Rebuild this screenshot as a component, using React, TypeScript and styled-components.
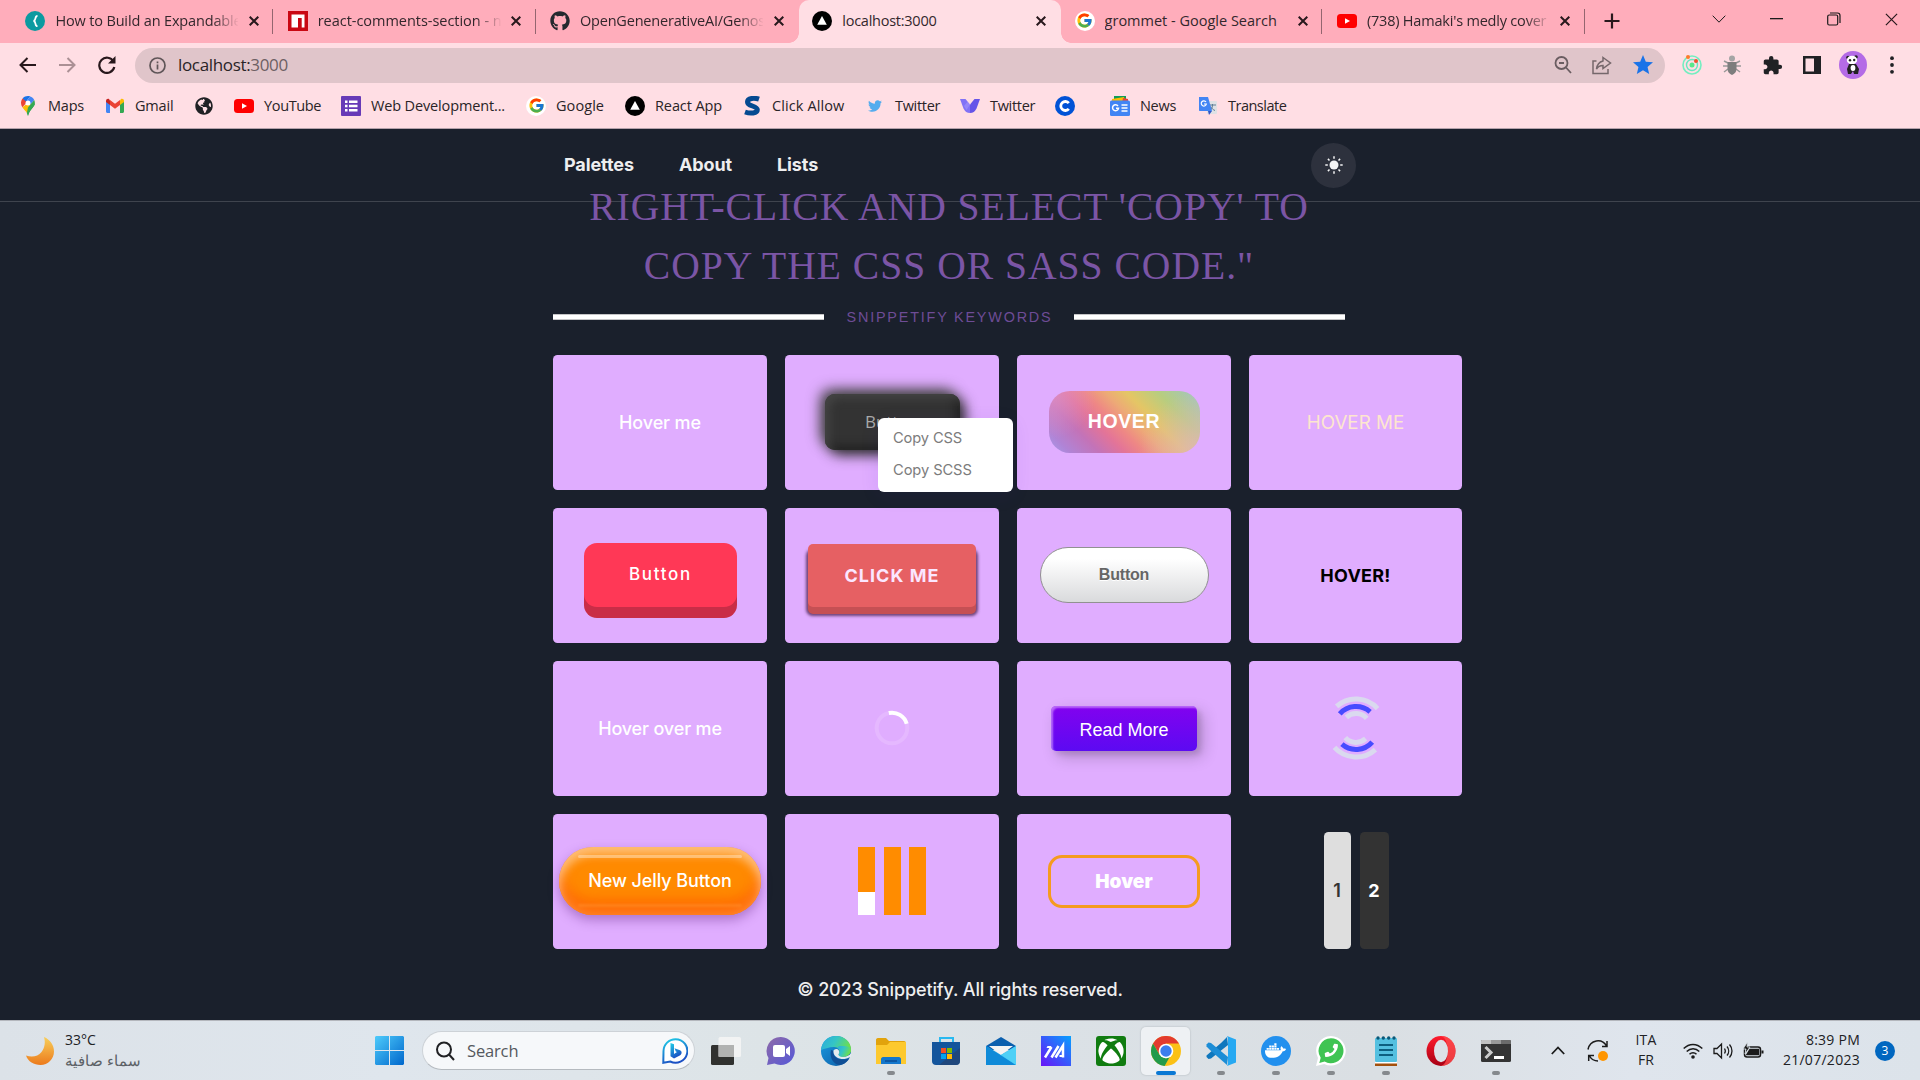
import React from "react";
import styled, { createGlobalStyle, css } from "styled-components";
import { FcGoogle } from "react-icons/fc";
import { FaGithub, FaTwitter, FaGlobeAmericas, FaXbox, FaDocker, FaPhoneAlt } from "react-icons/fa";
import { MdExtension, MdStar } from "react-icons/md";

const ui = `"Open Sans", "Noto Sans", sans-serif`;
const inter = `Inter, "Liberation Sans", sans-serif`;
const arial = `"Liberation Sans", Arial, sans-serif`;

const Global = createGlobalStyle`
  * { box-sizing: border-box; }
  html, body { margin: 0; padding: 0; background: #1a202c; overflow: hidden; }
  svg { display: block; flex: none; }
`;

type Spaced = { $ls?: number };
const spacing = css<Spaced>`letter-spacing: ${(p) => p.$ls ?? 0}px;`;

const Screen = styled.div`
  width: 1920px; height: 1080px; display: flex; flex-direction: column;
  background: #1a202c; font-family: ${ui}; overflow: hidden;
`;

/* ---------- browser chrome ---------- */
const TabStrip = styled.div`
  height: 43px; flex: none; display: flex; padding-left: 12px; background: #ffadbb;
`;
const Tab = styled.div<{ $active?: boolean; $line?: boolean }>`
  position: relative; width: 262.3px; height: 43px; flex: none; display: flex; align-items: center;
  padding: 0 11px 2px 13.4px; color: #33272c;
  ${(p) => p.$active && css`
    background: #ffdee4; border-radius: 10px 10px 0 0;
    &::before, &::after {
      content: ""; position: absolute; bottom: 0; width: 10px; height: 10px;
    }
    &::before { left: -10px; background: radial-gradient(circle at 0 0, transparent 9.5px, #ffdee4 10px); }
    &::after { right: -10px; background: radial-gradient(circle at 100% 0, transparent 9.5px, #ffdee4 10px); }
  `}
  ${(p) => p.$line && css`
    background: linear-gradient(#94656f, #94656f) calc(100% - 1px) 9px / 1px 25px no-repeat;
  `}
`;
const TabTitle = styled.div<Spaced & { $fade?: boolean }>`
  width: 183px; margin: 0 10.6px 0 10px; overflow: hidden; white-space: nowrap; font-size: 14.5px; line-height: 24px;
  ${spacing}
  ${(p) => p.$fade && css`mask-image: linear-gradient(90deg, #000 158px, transparent 184px);`}
`;
const NewTab = styled.div`width: 52px; display: flex; align-items: center; justify-content: center; padding-bottom: 1px;`;
const WindowControls = styled.div`
  margin-left: auto; display: flex; height: 38px;
  & > div { width: 57.5px; display: flex; align-items: center; justify-content: center; }
`;
const Toolbar = styled.div`
  height: 45px; flex: none; display: flex; align-items: center; background: #ffdee4; padding: 0 0 1px 15px;
`;
const NavIcon = styled.div<{ $w: number }>`width: ${(p) => p.$w}px; flex: none; display: flex; align-items: center; justify-content: center;`;
const Omnibox = styled.div`
  width: 1530px; height: 35px; border-radius: 18px; background: #e0c5ca; display: flex; align-items: center;
  padding: 0 10px 0 14px; flex: none;
`;
const Url = styled.div<Spaced>`
  font-size: 17px; margin-left: 12px; color: #2a2427; flex: 1; white-space: nowrap; line-height: 24px; ${spacing}
  span { color: #6d5f63; }
`;
const OmniIcons = styled.div`display: flex; align-items: center; gap: 18px;`;
const Bookmarks = styled.div`
  height: 41px; flex: none; display: flex; align-items: center; padding: 0 0 5px 18px; background: #ffdee4;
  border-bottom: 1px solid #b5a2ab;
`;
const Bookmark = styled.div<{ $w: number }>`
  width: ${(p) => p.$w}px; flex: none; display: flex; align-items: center; gap: 10px; color: #2a2427;
`;
const BookmarkIcon = styled.div`width: 20px; height: 20px; display: flex; align-items: center; justify-content: center; flex: none;`;
const BookmarkLabel = styled.span<Spaced>`font-size: 14.5px; white-space: nowrap; line-height: 22px; ${spacing}`;
const GoogleDisc = styled.div`
  width: 20px; height: 20px; flex: none; border-radius: 50%; background: #fff; display: flex; align-items: center; justify-content: center;
`;

/* ---------- web page ---------- */
const Page = styled.div`height: 891px; flex: none; display: flex; flex-direction: column; font-family: ${inter};`;
const Header = styled.header`
  height: 73px; flex: none; border-bottom: 1px solid #3f444e; padding: 0 564px 0 564px;
  display: flex; align-items: center; gap: 45px;
`;
const NavLink = styled.a<Spaced>`color: #eeeeef; font-weight: 700; font-size: 18px; line-height: 24px; white-space: nowrap; ${spacing}`;
const ThemeToggle = styled.div`
  width: 45px; height: 45px; border-radius: 50%; background: #2d313d; margin-left: auto;
  display: flex; align-items: center; justify-content: center;
`;
const Main = styled.main`width: 792px; margin: -24px 0 0 553px; flex: none;`;
const Title = styled.h1<Spaced>`
  margin: 0; font: 400 39.6px/59px "Liberation Serif", "Times New Roman", serif; color: #7b55a5; text-align: center; ${spacing}
`;
const Divider = styled.div`height: 42px; display: flex; align-items: center; justify-content: space-between;`;
const Rule = styled.div`width: 271px; height: 6px; background: #fff; border: solid #c4c4c6; border-width: 1px 0;`;
const Keywords = styled.span<Spaced>`font: 400 14.4px/20px ${arial}; color: #6e4c96; white-space: nowrap; padding-left: 1px; margin-top: -1px; ${spacing}`;

const Grid = styled.section`
  margin-top: 17px; width: 909px; display: grid; grid-template-columns: 214px 214px 214px 213px; grid-auto-rows: 135px; gap: 18px;
`;
const Card = styled.div<{ $plain?: boolean }>`
  position: relative; border-radius: 4.5px; display: flex; align-items: center; justify-content: center;
  background: ${(p) => (p.$plain ? "transparent" : "#e0adff")};
`;
const Caption = styled.span<Spaced & { $color?: string; $weight?: number; $size?: number }>`
  font-size: ${(p) => p.$size ?? 18}px; font-weight: ${(p) => p.$weight ?? 500}; color: ${(p) => p.$color ?? "#fff"};
  line-height: 24px; white-space: nowrap; ${spacing}
`;
const NeuButton = styled.div`
  width: 135px; height: 56px; margin-bottom: 1px; border-radius: 10px; background: #333; color: #aaa;
  display: flex; align-items: center; justify-content: center; font: 500 17px/24px ${ui};
  box-shadow: -4.5px -4.5px 13.5px #444, 4.5px 4.5px 13.5px #222, inset 4.5px 4.5px 9px #444, inset -4.5px -4.5px 9px #222;
`;
const ContextMenu = styled.div`
  position: absolute; left: 93px; top: 63px; z-index: 3; width: 135px; height: 74px; border-radius: 6px; background: #fff;
  box-shadow: 0 4px 20px rgba(60, 30, 160, 0.08);
  padding: 3px 15px 5px; display: flex; flex-direction: column; justify-content: center;
`;
const MenuItem = styled.div<Spaced>`font: 400 14.7px/32px ${inter}; color: #7c7c7c; white-space: nowrap; ${spacing}`;
const RainbowButton = styled.div`
  width: 151px; height: 62px; margin-bottom: 1px; border-radius: 21px; display: flex; align-items: center; justify-content: center; padding-bottom: 2px;
  font-family: ${arial};
  background:
    radial-gradient(circle at 100% 100%, rgba(224, 180, 190, 0.85) 0, rgba(210, 185, 170, 0) 62px),
    radial-gradient(circle at 0 0, rgba(224, 150, 205, 0.75) 0, rgba(224, 150, 205, 0) 48px),
    linear-gradient(45deg, #a79cec 0%, #b084d6 10%, #c373b8 24%, #e37498 36%, #ee8785 45%, #edaa76 55%, #e4c665 65%, #b7cd80 80%, #a0c4c8 100%);
`;
const PushButton = styled.div`
  width: 153px; height: 64px; margin: 0 0 1px 1px; padding-bottom: 2px; border-radius: 13px; background: #ff3856; box-shadow: 0 11px 0 #c92d47;
  display: flex; align-items: center; justify-content: center;
`;
const ClickButton = styled.div`
  width: 168px; height: 63px; border-radius: 5px; background: #e66063; display: flex; align-items: center; justify-content: center;
  box-shadow: 0 7px 0 #c55054, 0 7px 3px 1.5px rgba(60, 20, 60, 0.7);
`;
const PillButton = styled.div`
  width: 169px; height: 56px; margin-bottom: 1px; border-radius: 28px; border: 1px solid #919191; display: flex; align-items: center; justify-content: center;
  background: linear-gradient(#fff 20%, #d9dadc); padding-bottom: 1px;
  font-family: ${arial}; text-shadow: 0 1px 0 #fff;
`;
const ReadButton = styled.div`
  width: 146px; height: 45px; border-radius: 5px; display: flex; align-items: center; justify-content: center; padding-top: 2px;
  background: linear-gradient(#8202ef, #5c0af2);
  font-family: ${arial};
  box-shadow: inset 2px 2px 2px rgba(224, 173, 255, 0.6), 6px 6px 16px rgba(0, 0, 0, 0.2), 4px 4px 5px rgba(0, 0, 0, 0.1);
`;
const JellyButton = styled.div`
  position: relative; width: 202px; height: 68px; margin-bottom: 1px; border-radius: 34px; display: flex; align-items: center; justify-content: center;
  background: #ff8a00;
  box-shadow: inset 0 9px 8px rgba(255, 255, 255, 0.36), inset 0 0 14px rgba(255, 190, 120, 0.55), inset 0 -14px 14px #ff6600, 0 5px 12px rgba(80, 20, 110, 0.36);
  &::before, &::after { content: ""; position: absolute; left: 19px; right: 19px; height: 3px; border-radius: 2px; }
  &::before { top: 8px; background: rgba(255, 225, 190, 0.5); filter: blur(0.6px); }
  &::after { bottom: 8px; background: rgba(255, 140, 40, 0.6); filter: blur(0.8px); }
`;
const Bars = styled.div`display: flex; gap: 8.5px; height: 68px; margin-bottom: 1px;`;
const Bar = styled.div<{ $fill: number }>`
  width: 17px; background: linear-gradient(#ff8c00 ${(p) => p.$fill}px, #fff ${(p) => p.$fill}px);
`;
const OutlineButton = styled.div`
  width: 152px; height: 53px; border-radius: 14px; border: 3px solid #f59b1f; display: flex; align-items: center; justify-content: center;
`;
const Lifted = styled.div`margin-bottom: 1px;`;
const Pages = styled.div`align-self: flex-end; display: flex; gap: 9px; height: 117px; padding-left: 1px;`;
const PageStep = styled.div<{ $w: number; $dark?: boolean }>`
  width: ${(p) => p.$w}px; border-radius: 4.5px; display: flex; align-items: center; justify-content: center;
  background: ${(p) => (p.$dark ? "#333" : "#dedede")};
`;
const Footer = styled.footer`flex: 1; padding-top: 11px; display: flex; align-items: center; justify-content: center;`;

/* ---------- taskbar ---------- */
const Taskbar = styled.div`
  height: 60px; flex: none; display: flex; align-items: center; border-top: 1px solid #b4b7bd; color: #202124;
  background: linear-gradient(90deg, #dce2e8, #dfe6ed 20%, #dde4e7 40%, #dbe1e6 55%, #dadfe3 72%, #dfe5ed 85%, #dce3ea);
`;
const Weather = styled.div`width: 375px; padding-left: 25px; display: flex; align-items: center; gap: 10px;`;
const Lines = styled.div<{ $align?: string }>`display: flex; flex-direction: column; align-items: ${(p) => p.$align ?? "flex-start"}; margin-top: -2px;`;
const Line = styled.span<Spaced & { $muted?: boolean }>`
  font-size: ${(p) => (p.$muted ? 14.7 : 14)}px; line-height: 20px; white-space: nowrap; color: ${(p) => (p.$muted ? "#5c6166" : "#202124")}; ${spacing}
`;
const SearchBox = styled.div`
  width: 273px; height: 39px; margin: 0 3px 0 18px; border-radius: 20px; background: #f6f8fa; border: 1px solid #cdd2d7; border-bottom-color: #b5babf;
  display: flex; align-items: center; padding: 0 6px 0 12px; flex: none;
`;
const SearchText = styled.span<Spaced>`font-size: 16.5px; color: #55595e; margin-left: 12px; flex: 1; line-height: 24px; ${spacing}`;
const AppSlot = styled.div<{ $active?: boolean }>`
  width: 49px; height: 48px; margin: 0 3px; border-radius: 5px; display: flex; flex-direction: column; align-items: center; padding-top: 9px; flex: none;
  ${(p) => p.$active && css`background: #eef1f4; box-shadow: 0 0 1px 1px rgba(190, 195, 200, 0.5);`}
`;
const Indicator = styled.div<{ $active?: boolean }>`
  width: ${(p) => (p.$active ? 20 : 8)}px; height: 4px; border-radius: 2px; margin-top: 5px;
  background: ${(p) => (p.$active ? "#0a78d4" : "#85898d")};
`;
const Tray = styled.div`margin-left: auto; display: flex; align-items: center; padding-right: 25px;`;
const TrayCell = styled.div<{ $w: number; $end?: boolean }>`
  width: ${(p) => p.$w}px; display: flex; align-items: center; justify-content: ${(p) => (p.$end ? "flex-end" : "center")};
`;
const Badge = styled.div`
  width: 20px; height: 20px; border-radius: 50%; background: #0067c0; color: #fff; margin-left: 15px; font-size: 12px; line-height: 20px; text-align: center;
`;

/* ---------- icons ---------- */
const Cross = ({ s = 10, w = 2 }: { s?: number; w?: number }) => (
  <svg width={s} height={s} viewBox="0 0 10 10" stroke="#28181c" strokeWidth={(w * 10) / s} fill="none"><path d="M.7.7l8.6 8.6M9.3.7L.7 9.3" /></svg>
);
const Teal = () => (
  <svg width="20" height="20" viewBox="0 0 20 20"><circle cx="10" cy="10" r="10" fill="#0b9aa0" />
    <path d="M12.500 4.800c-3.200 0-.8 4.600-4 5.200 3.200.6.8 5.200 4 5.200" stroke="#fff" strokeWidth="1.800" fill="none" /></svg>
);
const Npm = () => (
  <svg width="20" height="20" viewBox="0 0 20 20"><path fill="#c90813" d="M0 0h20v20H0z" /><path fill="#fff" d="M3.500 3.500h13v13h-2.800V7H10v9.500H3.500z" /></svg>
);
const Triangle = () => (
  <svg width="20" height="20" viewBox="0 0 20 20"><circle cx="10" cy="10" r="10" fill="#000" /><path fill="#fff" d="M10 5l4.800 8.800H5.200z" /></svg>
);
const YouTube = () => (
  <svg width="20" height="20" viewBox="0 0 20 20"><rect y="3" width="20" height="14" rx="3.500" fill="#f00" /><path fill="#fff" d="M8 7.200l5 2.800-5 2.800z" /></svg>
);
const Google = () => <GoogleDisc><FcGoogle size={17} /></GoogleDisc>;
const MapsPin = () => (
  <svg width="14" height="20" viewBox="0 0 14 20">
    <path fill="#34a853" d="M7 20c.6-3 2-5 4-7.500C12.800 10.300 14 9 14 7L6 14c.5 2 .7 4 1 6z" />
    <path fill="#fbbc04" d="M1.400 11.200C3 13.500 5 15.500 6 17L13 8l-6-1z" />
    <path fill="#ea4335" d="M1.600 2.500C-.5 5-.5 8.500 1.400 11.200L7 5z" />
    <path fill="#1a73e8" d="M1.600 2.500L5 5.500 9.200.4C6.400-.4 3.500.3 1.600 2.500z" />
    <path fill="#4285f4" d="M9.200.4L5 5.500l4 3.500L13.200 4C12.300 2.200 11 1 9.200.4z" />
    <path fill="#34a853" d="M13.200 4L7 11.500 5.800 17 7 20c.6-3 2-5 4-7.500 3-3.600 3.500-5.500 2.200-8.500z" />
    <circle cx="7" cy="7" r="2.500" fill="#fff" />
  </svg>
);
const Gmail = () => (
  <svg width="20" height="20" viewBox="0 0 20 20">
    <path fill="#4285f4" d="M1 5v10.500c0 .8.600 1.500 1.500 1.500H5V8z" /><path fill="#34a853" d="M19 5v10.500c0 .8-.6 1.500-1.500 1.500H15V8z" />
    <path fill="#fbbc04" d="M15 4.500V9l4-3V4.800c0-1.800-2-2.600-3.200-1.600z" /><path fill="#c5221f" d="M5 4.500V9L1 6V4.800C1 3 3 2.200 4.200 3.200z" />
    <path fill="#ea4335" d="M5 9V4l5 3.800L15 4v5l-5 3.800z" />
  </svg>
);
const FormIcon = () => (
  <svg width="20" height="20" viewBox="0 0 20 20"><rect width="20" height="20" rx="1" fill="#673ab7" />
    <path fill="#fff" d="M4 4.500h2.500V7H4zM8 4.500h8.500V7H8zM4 8.800h2.500v2.500H4zM8 8.800h8.500v2.500H8zM4 13h2.500v2.500H4zM8 13h8.500v2.500H8z" /></svg>
);
const SIcon = () => (
  <svg width="20" height="20" viewBox="0 0 20 20"><path d="M17 3.200C13 1.800 5.500 1.600 5.500 6c0 4.600 9.800 3.400 9.800 7.800 0 3.600-7 4-12.300 2.200" stroke="#054a91" strokeWidth="5" fill="none" /></svg>
);
const VIcon = () => (
  <svg width="20" height="20" viewBox="0 0 20 20"><path fill="#8172f6" d="M0 3h5.500L10 8.500V17c-3 0-5-1.500-6.500-4.500z" /><path fill="#6554e8" d="M20 3h-5.500L10 8.500V17c3 0 5-1.500 6.500-4.500z" /><path fill="#a394fb" d="M4 10l3.500-4.200L10 8.500 6.500 14z" opacity=".6" /></svg>
);
const CIcon = () => (
  <svg width="20" height="20" viewBox="0 0 20 20"><circle cx="10" cy="10" r="10" fill="#0052d6" /><path d="M13.800 7.200a4.500 4.500 0 1 0 0 5.600" stroke="#fff" strokeWidth="2.800" fill="none" /></svg>
);
const NewsIcon = () => (
  <svg width="20" height="20" viewBox="0 0 20 20"><path fill="#0f9d58" d="M4 0h12v6H4z" /><path fill="#fbbc04" d="M2 3l12-2 1 6H2z" /><path fill="#ea4335" d="M13 2l5 1v4h-6z" />
    <rect y="4.500" width="20" height="15.500" rx="1.500" fill="#4285f4" /><path d="M11.500 9h6M11.500 12h6M11.500 15h6" stroke="#fff" strokeWidth="1.400" /><path d="M8 10a3 3 0 1 0 .5 2.300H6" stroke="#fff" strokeWidth="1.500" fill="none" /></svg>
);
const TranslateIcon = () => (
  <svg width="20" height="20" viewBox="0 0 20 20"><rect x="9" y="5" width="10" height="13" rx="1" fill="#dfe1e5" /><path d="M11 9h7M14.500 8v1c0 3-1.500 5-3 6M12.500 10.500c1 2 3 3.500 4.500 4" stroke="#5f7d95" fill="none" />
    <path fill="#4285f4" d="M1 1h9l4 14H2c-.6 0-1-.4-1-1z" /><path fill="#3354c4" d="M10 15h4l-3 4z" /><path d="M8 6a2.600 2.600 0 1 0 .400 2H6" stroke="#fff" strokeWidth="1.200" fill="none" /></svg>
);
const Panda = () => (
  <svg width="28" height="28" viewBox="0 0 28 28"><circle cx="14" cy="14" r="14" fill="#b46be6" />
    <circle cx="9" cy="6.500" r="1.800" fill="#222" /><circle cx="17" cy="6" r="1.800" fill="#222" /><ellipse cx="13" cy="9" rx="5.200" ry="4.300" fill="#fff" />
    <circle cx="11" cy="9.200" r="1.200" fill="#222" /><circle cx="15.200" cy="9" r="1.200" fill="#222" />
    <path fill="#222" d="M10 13h7l3 5-1 5h-4l-1-3-2 3H9l-1-5z" /><ellipse cx="14" cy="17" rx="2.400" ry="3" fill="#fff" /></svg>
);
const Sun = () => (
  <svg width="18" height="18" viewBox="0 0 18 18" stroke="#f4f4f5" strokeWidth="1.500"><circle cx="9" cy="9" r="4.500" fill="#f4f4f5" stroke="none" />
    <path d="M9 .3v2.500M9 15.200v2.500M.3 9h2.500M15.200 9h2.500M2.900 2.900l1.600 1.600M13.500 13.500l1.600 1.600M2.900 15.100l1.600-1.600M13.500 4.500l1.600-1.600" /></svg>
);
const Arcs = () => (
  <svg width="66" height="66" viewBox="-33 -33 66 66" fill="none" strokeWidth="5">
    <g stroke="#dad9ef" transform="rotate(3)"><path d="M-20.500-20.500a29 29 0 0 1 41 0M-20.500 20.500a29 29 0 0 0 41 0" /></g>
    <g stroke="#474bff" transform="rotate(-4)"><path d="M-15.200-15.200a21.500 21.500 0 0 1 30.400 0M-15.200 15.200a21.500 21.500 0 0 0 30.400 0" /></g>
    <g stroke="#dad9ef" transform="rotate(3)"><path d="M-10.200-10.200a14.400 14.400 0 0 1 20.400 0M-10.200 10.200a14.400 14.400 0 0 0 20.400 0" /></g>
  </svg>
);
const Spinner = () => (
  <svg width="36" height="36" viewBox="-18 -18 36 36" fill="none" strokeWidth="4"><circle r="15.300" stroke="#e5b8ff" /><path d="M-3.200-15A15.300 15.300 0 0 1 14.700-4.200" stroke="#fff" /></svg>
);

const Moon = () => (
  <svg width="30" height="30" viewBox="0 0 30 30"><defs><linearGradient id="moon" x1="0" y1="0" x2="0" y2="1"><stop stopColor="#f8cf5a" /><stop offset="1" stopColor="#ec7a1c" /></linearGradient></defs>
    <path fill="url(#moon)" d="M19 1c6 2.500 10 8 10 14.500C29 23 23 29 15.500 29 9 29 3 25.500 1 19.500c6 2 12 1 15.500-3.500S20.500 6 19 1z" /></svg>
);
const WinLogo = () => (
  <svg width="29" height="29" viewBox="0 0 29 29"><defs><linearGradient id="win" x1="0" y1="0" x2="1" y2="1"><stop stopColor="#4ecbfb" /><stop offset="1" stopColor="#0067cc" /></linearGradient></defs>
    <path fill="url(#win)" d="M1 0h13v14H0V1zM15 0h13l1 1v13H15zM0 15h14v14H1l-1-1zM15 15h14v13l-1 1H15z" /></svg>
);
const Bing = () => (
  <svg width="26" height="26" viewBox="0 0 26 26"><defs><linearGradient id="bing" x1="0" y1="0" x2=".4" y2="1"><stop stopColor="#1fd0e8" /><stop offset="1" stopColor="#1b50c4" /></linearGradient></defs>
    <path d="M13.500 1.200a11.800 11.800 0 1 1-5.300 22.300L1.300 24.700 1.500 13A12 12 0 0 1 13.500 1.200z" fill="#fff" stroke="url(#bing)" strokeWidth="2" />
    <path fill="url(#bing)" d="M8.500 5l3.500 1.300V16l3-2-1.200-.6-1.300-3.200 5.500 2.100c2.200 1 2.200 4-.2 5.200L12 20.500l-3.500-2.200z" /></svg>
);
const TaskView = () => (
  <svg width="30" height="30" viewBox="0 0 30 30"><rect y="9" width="23" height="20" rx="1.500" fill="#30312f" /><rect x="7.500" y="1" width="22.500" height="20" rx="1.500" fill="#f4f4f4" opacity=".9" /><path fill="#a5a6a5" d="M7.500 9H23v12H7.500z" opacity=".8" /></svg>
);
const Chat = () => (
  <svg width="30" height="30" viewBox="0 0 30 30"><defs><linearGradient id="chat" x1="0" y1="0" x2="1" y2="1"><stop stopColor="#8f6aa8" /><stop offset="1" stopColor="#5558d8" /></linearGradient></defs>
    <path fill="url(#chat)" d="M15 1a14 14 0 1 1-6.500 26.500L1 29l1.500-7A14 14 0 0 1 15 1z" /><rect x="7" y="9" width="12" height="12" rx="2" fill="#fff" /><path fill="#fff" d="M20 13l4-3v10l-4-3z" /></svg>
);
const Edge = () => (
  <svg width="30" height="30" viewBox="0 0 30 30"><defs><linearGradient id="e1" x1="0" y1="0" x2="1" y2=".4"><stop stopColor="#28a8e0" /><stop offset=".5" stopColor="#35c5c5" /><stop offset="1" stopColor="#6ee04a" /></linearGradient>
    <linearGradient id="e2" x1="0" y1="0" x2="1" y2="1"><stop stopColor="#1b9de2" /><stop offset="1" stopColor="#0c59a4" /></linearGradient></defs>
    <circle cx="15" cy="15" r="15" fill="url(#e2)" /><path fill="url(#e1)" d="M0 14C1 5 7 0 15 0c9 0 15 6.500 15 13 0 5-4 7.500-8 7.500-3 0-5-1-4-2.800C20 14 17 11 13 11 8 11 3 13 0 14z" />
    <path fill="#0f4f96" d="M10 14c-2 8 3 15 9 15 5-1 8-4 9.500-7-5 3-17 2-16-7z" /><path fill="#e4eaee" d="M12.500 15c-.5 5 5 8.500 11 8 3-.3 4.500-1.500 6-2.500L30 22l1-7c-1 4-5 6-9 5.700-4-.2-5-1.700-4-3.200 1-2-.5-4.500-2.500-4.500s-3 1-3 2z" />
    <path fill="url(#e1)" d="M18 10c6 0 12 0 12 4 0 4-4 6.700-8 6.700s-5-1.500-4-3.200c2-3 0-5-2-5.500z" /></svg>
);
const Folder = () => (
  <svg width="30" height="30" viewBox="0 0 30 30"><path fill="#e2a30c" d="M0 4c0-1 .5-2 2-2h8l3 3h15c1 0 2 .7 2 2v4H0z" /><path fill="#fdc92e" d="M0 9h11l3-3h16v22H0z" /><path fill="#1377cc" d="M5 28v-5c0-1 1-2 2-2h16c1 0 2 1 2 2v5z" /><path d="M9 25h12" stroke="#0a4d96" strokeWidth="1.500" /></svg>
);
const Store = () => (
  <svg width="30" height="30" viewBox="0 0 30 30"><path d="M9 7V2h13v5" stroke="#29b9f0" strokeWidth="2" fill="none" /><path fill="#14559c" d="M1 6h28v19c0 2.500-1.500 4-4 4H5c-2.500 0-4-1.500-4-4z" /><path fill="#23426f" d="M29 12v13c0 2.500-1.500 4-4 4H8z" opacity=".7" />
    <path fill="#f25022" d="M10 12h5v5h-5z" /><path fill="#7fba00" d="M16 12h5v5h-5z" /><path fill="#00a4ef" d="M10 18h5v5h-5z" /><path fill="#ffb900" d="M16 18h5v5h-5z" /></svg>
);
const Mail = () => (
  <svg width="30" height="30" viewBox="0 0 30 30"><path fill="#0b5fae" d="M0 10L15 1l15 9v4H0z" /><path fill="#f3f3f3" d="M3 10h24l-12 9z" /><path fill="#28b2ef" d="M0 10l15 9 15-9v19H0z" /><path fill="#0f8ad8" d="M0 10l30 19H0z" /><path fill="#4fd0f6" d="M15 19l15-9v19z" /></svg>
);
const MyAsus = () => (
  <svg width="30" height="30" viewBox="0 0 30 30"><defs><linearGradient id="ma" x1="1" y1="0" x2="0" y2="1"><stop stopColor="#06a0ff" /><stop offset="1" stopColor="#6a13f7" /></linearGradient></defs><path fill="url(#ma)" d="M0 0h30v30H0z" />
    <path stroke="#fff" strokeWidth="2.500" fill="none" d="M4 21.500L10.500 11M10.500 21.500L17.500 10M14.500 21.500L22 9.500v12" /><path fill="#fff" d="M6.500 10h4l-1.300 2H5.500zM18.500 19h3v2h-3z" /></svg>
);
const XboxTile = styled.div`width: 30px; height: 30px; border-radius: 3px; background: #107c10; display: flex; align-items: center; justify-content: center; color: #fff;`;
const Chrome = () => (
  <svg width="30" height="30" viewBox="0 0 30 30"><circle cx="15" cy="15" r="15" fill="#fbc116" /><path fill="#e33b2e" d="M2 7.500a15 15 0 0 1 26 0H15l-6.500 11z" /><path fill="#229a4b" d="M2 7.500l6.500 11.200L15 22.500l4.500-3-5.900 10.400A15 15 0 0 1 2 7.500z" /><circle cx="15" cy="15" r="7.300" fill="#fff" /><circle cx="15" cy="15" r="5.700" fill="#3b7ded" /></svg>
);
const VSCode = () => (
  <svg width="30" height="30" viewBox="0 0 30 30"><path fill="#0f77bd" d="M21 1L22 9 5 22.500 2.500 23 .5 21v-1.500L15 7z" /><path fill="#1c8dd6" d="M.5 10.500v-2l2-2L5 7l17 14-1 8L4 14z" /><path fill="#27a9f2" d="M21 0l9 3.500v23L21 30c.5-1 1-2 1-3V3c0-1-.5-2-1-3z" /></svg>
);
const DockerTile = styled.div`width: 30px; height: 30px; border-radius: 50%; background: #2290ee; display: flex; align-items: center; justify-content: center; color: #fff;`;
const WhatsTile = () => (
  <svg width="30" height="30" viewBox="0 0 30 30"><path fill="#fff" d="M15 0a14.800 14.800 0 1 1-6.800 28L0 30l2-8A14.800 14.800 0 0 1 15 0z" /><path fill="#3fc453" d="M15 2.300a12.500 12.500 0 1 1-6.300 23.300L3.300 26.900l1.400-5.200A12.500 12.500 0 0 1 15 2.300z" />
    <g transform="translate(22 7.500) scale(-1 1)"><FaPhoneAlt size={13.5} color="#fff" /></g></svg>
);
const Notepad = () => (
  <svg width="30" height="30" viewBox="0 0 30 30"><path fill="#a3500c" d="M4 26h22v4H4z" /><path fill="#fff" d="M4 25h22v2.500H4z" /><rect x="4" y="2" width="22" height="24" rx="1" fill="#54c0e0" /><path d="M8 9h14M8 14h14M8 19h14" stroke="#0d5f80" strokeWidth="2" />
    <g fill="#0a5878"><circle cx="7" cy="2" r="1.700" /><circle cx="12.300" cy="2" r="1.700" /><circle cx="17.700" cy="2" r="1.700" /><circle cx="23" cy="2" r="1.700" /></g></svg>
);
const Opera = () => (
  <svg width="30" height="30" viewBox="0 0 30 30"><defs><linearGradient id="op" x1="0" y1="0" x2="0" y2="1"><stop stopColor="#ff1b2d" /><stop offset="1" stopColor="#a70014" /></linearGradient></defs>
    <ellipse cx="15" cy="15" rx="14.500" ry="15" fill="url(#op)" /><path fill="#ff5050" opacity=".75" d="M15 0c9 0 14.500 7 14.500 15S24 30 15 30c9-2 9-28 0-30z" /><ellipse cx="15" cy="15" rx="7" ry="11.300" fill="#dde2e8" /></svg>
);
const Terminal = () => (
  <svg width="30" height="30" viewBox="0 0 30 30"><rect y="4" width="30" height="22" rx="1.500" fill="#343434" /><path fill="#c2c2c2" d="M0 5.500C0 4.500.5 4 1.500 4H10v4H0z" /><path fill="#999" d="M10 4h10v4H10z" /><path fill="#6b6b6b" d="M20 4h8.500c1 0 1.500.5 1.500 1.500V8H20z" /><path d="M4.500 11l5.500 5.500L4.500 22" stroke="#ccc" strokeWidth="3" fill="none" /><path fill="#fff" d="M13 20h10v3H13z" /></svg>
);

const stroke = { fill: "none", stroke: "#1b1b1b" } as const;

const apps: { icon: React.ReactNode; open?: boolean; active?: boolean }[] = [
  { icon: <TaskView /> },
  { icon: <Chat /> },
  { icon: <Edge /> },
  { icon: <Folder />, open: true },
  { icon: <Store /> },
  { icon: <Mail /> },
  { icon: <MyAsus /> },
  { icon: <XboxTile><FaXbox size={26} /></XboxTile> },
  { icon: <Chrome />, open: true, active: true },
  { icon: <VSCode />, open: true },
  { icon: <DockerTile><FaDocker size={21} /></DockerTile>, open: true },
  { icon: <WhatsTile />, open: true },
  { icon: <Notepad />, open: true },
  { icon: <Opera /> },
  { icon: <Terminal />, open: true },
];

const bookmarks: { icon: React.ReactNode; label?: string; w: number; ls?: number }[] = [
  { icon: <MapsPin />, label: "Maps", w: 87, ls: -0.2 },
  { icon: <Gmail />, label: "Gmail", w: 89, ls: -0.2 },
  { icon: <FaGlobeAmericas size={18} color="#202124" />, w: 40 },
  { icon: <YouTube />, label: "YouTube", w: 107, ls: -0.35 },
  { icon: <FormIcon />, label: "Web Development...", w: 185, ls: -0.14 },
  { icon: <Google />, label: "Google", w: 99, ls: 0.07 },
  { icon: <Triangle />, label: "React App", w: 117, ls: -0.1 },
  { icon: <SIcon />, label: "Click Allow", w: 123, ls: 0.1 },
  { icon: <FaTwitter size={14} color="#55acee" />, label: "Twitter", w: 95, ls: -0.3 },
  { icon: <VIcon />, label: "Twitter", w: 95, ls: -0.3 },
  { icon: <CIcon />, w: 55 },
  { icon: <NewsIcon />, label: "News", w: 88, ls: -0.3 },
  { icon: <TranslateIcon />, label: "Translate", w: 90, ls: -0.5 },
];

export default function App() {
  return (
    <Screen>
      <Global />
      <TabStrip>
        <Tab $line><Teal /><TabTitle $fade $ls={-0.15}>How to Build an Expandable</TabTitle><Cross /></Tab>
        <Tab $line><Npm /><TabTitle $fade $ls={-0.03}>react-comments-section - n</TabTitle><Cross /></Tab>
        <Tab><FaGithub size={20} color="#24292f" /><TabTitle $fade $ls={-0.2}>OpenGenenerativeAI/Genos</TabTitle><Cross /></Tab>
        <Tab $active><Triangle /><TabTitle $ls={-0.25}>localhost:3000</TabTitle><Cross /></Tab>
        <Tab $line><Google /><TabTitle>grommet - Google Search</TabTitle><Cross /></Tab>
        <Tab $line><YouTube /><TabTitle $fade $ls={-0.2}>(738) Hamaki's medly cover</TabTitle><Cross /></Tab>
        <NewTab><svg width="16" height="16" viewBox="0 0 16 16" stroke="#28181c" strokeWidth="2.200"><path d="M8 .5v15M.5 8h15" /></svg></NewTab>
        <WindowControls>
          <div><svg width="14" height="8" viewBox="0 0 14 8" {...stroke}><path d="M.7.7L7 7.200 13.300.7" /></svg></div>
          <div><svg width="13" height="2" viewBox="0 0 13 2"><path d="M0 0h13v1.300H0z" fill="#1b1b1b" /></svg></div>
          <div><svg width="14" height="14" viewBox="0 0 14 14" {...stroke} strokeWidth="1.200"><rect x=".7" y="3" width="10" height="10" rx="1.500" /><path d="M3 1h7.500C12 1 13 2 13 3.500V11" /></svg></div>
          <div><Cross s={13} w={1.2} /></div>
        </WindowControls>
      </TabStrip>
      <Toolbar>
        <NavIcon $w={24}><svg width="17" height="16" viewBox="0 0 17 16" fill="none" stroke="#28181c" strokeWidth="2"><path d="M17 8H2M8.500 1l-7 7 7 7" /></svg></NavIcon>
        <NavIcon $w={56}><svg width="17" height="16" viewBox="0 0 17 16" fill="none" stroke="#ab9095" strokeWidth="2"><path d="M0 8h15M8.500 1l7 7-7 7" /></svg></NavIcon>
        <NavIcon $w={24}><svg width="18" height="18" viewBox="0 0 18 18" fill="none" stroke="#28181c" strokeWidth="2.200"><path d="M15.500 5.500A7.600 7.600 0 1 0 16.300 11" /><path fill="#28181c" stroke="none" d="M17.500 0v7.500H10z" /></svg></NavIcon>
        <NavIcon $w={16} />
        <Omnibox>
          <svg width="17" height="17" viewBox="0 0 17 17" fill="none" stroke="#5f5558" strokeWidth="1.700"><circle cx="8.500" cy="8.500" r="7.500" /><path d="M8.500 7.500v5M8.500 4.500v1.700" /></svg>
          <Url $ls={-0.34}>localhost:<span>3000</span></Url>
          <OmniIcons>
            <svg width="20" height="20" viewBox="0 0 20 20" fill="none" stroke="#6a5d61" strokeWidth="1.800"><circle cx="8.500" cy="8" r="6" /><path d="M13 12.500l5 5.500M6 8h5" /></svg>
            <svg width="22" height="20" viewBox="0 0 22 20" fill="none" stroke="#75676b" strokeWidth="1.500"><path d="M5.500 6H2v12.500h15V14M12 2.500l7.500 5.500-7.500 5.500V10.500c-3 0-5 1-6.500 3.500.5-4 2.500-7 6.500-8z" /></svg>
            <MdStar size={24} color="#1a73e8" />
          </OmniIcons>
        </Omnibox>
        <NavIcon $w={54}><svg width="20" height="22" viewBox="0 0 20 22" fill="none"><circle cx="10" cy="11" r="9" stroke="#74eec0" strokeWidth="1.600" /><circle cx="10" cy="11" r="5.500" stroke="#68e6c0" strokeWidth="1.400" /><circle cx="10" cy="11" r="2.500" fill="#58e88c" /><circle cx="6" cy="3" r="2" fill="#ff7a2a" /><circle cx="14" cy="7" r="2" fill="#f4502e" /></svg></NavIcon>
        <NavIcon $w={26}><svg width="18" height="20" viewBox="0 0 18 20"><path d="M1 6l4 2M17 6l-4 2M0 11h5M18 11h-5M1 17l4-3M17 17l-4-3" stroke="#999" strokeWidth="1.500" /><circle cx="9" cy="3.500" r="3" fill="#a5a5a5" /><path fill="#7d7d7d" d="M4.500 7h9v7c0 3-2 5-4.500 6-2.500-1-4.500-3-4.500-6z" /></svg></NavIcon>
        <NavIcon $w={54}><MdExtension size={21} color="#202124" /></NavIcon>
        <NavIcon $w={26}><svg width="18" height="18" viewBox="0 0 18 18"><path fill="#202124" d="M0 0h18v18H0z" /><path fill="#ffdee4" d="M2.500 2.500h8.500v13H2.500z" /></svg></NavIcon>
        <NavIcon $w={55}><Panda /></NavIcon>
        <NavIcon $w={24}><svg width="4" height="18" viewBox="0 0 4 18" fill="#202124"><circle cx="2" cy="2.200" r="1.900" /><circle cx="2" cy="9" r="1.900" /><circle cx="2" cy="15.800" r="1.900" /></svg></NavIcon>
      </Toolbar>
      <Bookmarks>
        {bookmarks.map((b, i) => (
          <Bookmark key={i} $w={b.w}>
            <BookmarkIcon>{b.icon}</BookmarkIcon>
            {b.label && <BookmarkLabel $ls={b.ls}>{b.label}</BookmarkLabel>}
          </Bookmark>
        ))}
      </Bookmarks>

      <Page>
        <Header>
          <NavLink $ls={-0.1}>Palettes</NavLink>
          <NavLink $ls={-0.1}>About</NavLink>
          <NavLink $ls={-0.1}>Lists</NavLink>
          <ThemeToggle><Sun /></ThemeToggle>
        </Header>
        <Main>
          <Title $ls={0.99}>RIGHT-CLICK AND SELECT 'COPY' TO<br />COPY THE CSS OR SASS CODE."</Title>
          <Divider><Rule /><Keywords $ls={1.8}>SNIPPETIFY KEYWORDS</Keywords><Rule /></Divider>
          <Grid>
            <Card><Caption $ls={-0.12}>Hover me</Caption></Card>
            <Card>
              <NeuButton>Button</NeuButton>
              <ContextMenu><MenuItem $ls={-0.14}>Copy CSS</MenuItem><MenuItem $ls={-0.1}>Copy SCSS</MenuItem></ContextMenu>
            </Card>
            <Card><RainbowButton><Caption $weight={700} $size={19.5} $ls={0.6}>HOVER</Caption></RainbowButton></Card>
            <Card><Caption $weight={400} $color="#fde6cf" $size={18.8}>HOVER ME</Caption></Card>
            <Card><PushButton><Caption $size={17} $ls={1.7}>Button</Caption></PushButton></Card>
            <Card><ClickButton><Caption $weight={700} $color="#fbe6ff" $ls={1.03}>CLICK ME</Caption></ClickButton></Card>
            <Card><PillButton><Caption $weight={700} $size={16} $color="#666" $ls={-0.2}>Button</Caption></PillButton></Card>
            <Card><Caption $weight={700} $color="#000" $ls={0.23}>HOVER!</Caption></Card>
            <Card><Caption $ls={-0.15}>Hover over me</Caption></Card>
            <Card><Lifted><Spinner /></Lifted></Card>
            <Card><ReadButton><Caption $weight={400}>Read More</Caption></ReadButton></Card>
            <Card><Lifted><Arcs /></Lifted></Card>
            <Card><JellyButton><Caption $ls={-0.08}>New Jelly Button</Caption></JellyButton></Card>
            <Card><Bars><Bar $fill={45} /><Bar $fill={68} /><Bar $fill={68} /></Bars></Card>
            <Card><OutlineButton><Caption $weight={900} $size={19}>Hover</Caption></OutlineButton></Card>
            <Card $plain>
              <Pages>
                <PageStep $w={27}><Caption $weight={600} $color="#333">1</Caption></PageStep>
                <PageStep $w={29} $dark><Caption $weight={700}>2</Caption></PageStep>
              </Pages>
            </Card>
          </Grid>
        </Main>
        <Footer><Caption $color="#eeeeef" $ls={-0.13}>© 2023 Snippetify. All rights reserved.</Caption></Footer>
      </Page>

      <Taskbar>
        <Weather><Moon /><Lines><Line>33°C</Line><Line $muted dir="rtl">سماء صافية</Line></Lines></Weather>
        <WinLogo />
        <SearchBox>
          <svg width="20" height="20" viewBox="0 0 20 20" fill="none" stroke="#202124" strokeWidth="2"><circle cx="9" cy="8.500" r="7" /><path d="M14 13.500l5 5.500" /></svg>
          <SearchText $ls={-0.15}>Search</SearchText><Bing />
        </SearchBox>
        {apps.map((a, i) => (
          <AppSlot key={i} $active={a.active}>{a.icon}{a.open && <Indicator $active={a.active} />}</AppSlot>
        ))}
        <Tray>
          <TrayCell $w={20}><svg width="14" height="9" viewBox="0 0 14 9" {...stroke} strokeWidth="1.800"><path d="M.8 8L7 1.500 13.200 8" /></svg></TrayCell>
          <TrayCell $w={60}><svg width="22" height="22" viewBox="0 0 22 22" {...stroke} strokeWidth="1.500"><path d="M1 9.500C3-.5 15-2 19.500 6M20 1v5.500h-5M11 21c-3.500 0-6.500-1.500-8.500-5M1.700 21v-5.500H7" /><circle cx="16" cy="16" r="5" fill="#ff9500" stroke="none" /></svg></TrayCell>
          <TrayCell $w={36}><Lines $align="center"><Line $ls={0.2}>ITA</Line><Line>FR</Line></Lines></TrayCell>
          <TrayCell $w={58}><svg width="20" height="16" viewBox="0 0 20 16" {...stroke} strokeWidth="1.500"><path d="M.7 5.500c5.500-5.500 13-5.500 18.600 0M3.700 8.500c3.700-3.700 9-3.700 12.600 0M6.500 11.300c2-2 5-2 7 0" /><circle cx="10" cy="14" r="1.800" fill="#1b1b1b" stroke="none" /></svg></TrayCell>
          <TrayCell $w={2}><svg width="20" height="18" viewBox="0 0 20 18" {...stroke} strokeWidth="1.300"><path d="M1 6.500h3L8.500 2v14L4 11.500H1zM11.500 6.500c1 1.500 1 3.500 0 5M14 4.500c2.200 2.600 2.200 6.400 0 9M16.500 2.500c3.300 3.800 3.300 9.200 0 13" /></svg></TrayCell>
          <TrayCell $w={58}><svg width="21" height="17" viewBox="0 0 21 17" {...stroke} strokeWidth="1.500"><rect x="1.500" y="5" width="16" height="10" rx="2.500" /><path fill="#1b1b1b" d="M7 7.500h8.500v5H4z" /><path d="M19.500 8.500v3" strokeWidth="2" /><path fill="#1b1b1b" stroke="#dde4ea" strokeWidth=".8" d="M4.500 0L0 7h3l-1 5 5-7H4z" /></svg></TrayCell>
          <TrayCell $w={78} $end><Lines $align="flex-end"><Line $ls={0.25}>8:39 PM</Line><Line $ls={0.28}>21/07/2023</Line></Lines></TrayCell>
          <Badge>3</Badge>
        </Tray>
      </Taskbar>
    </Screen>
  );
}
